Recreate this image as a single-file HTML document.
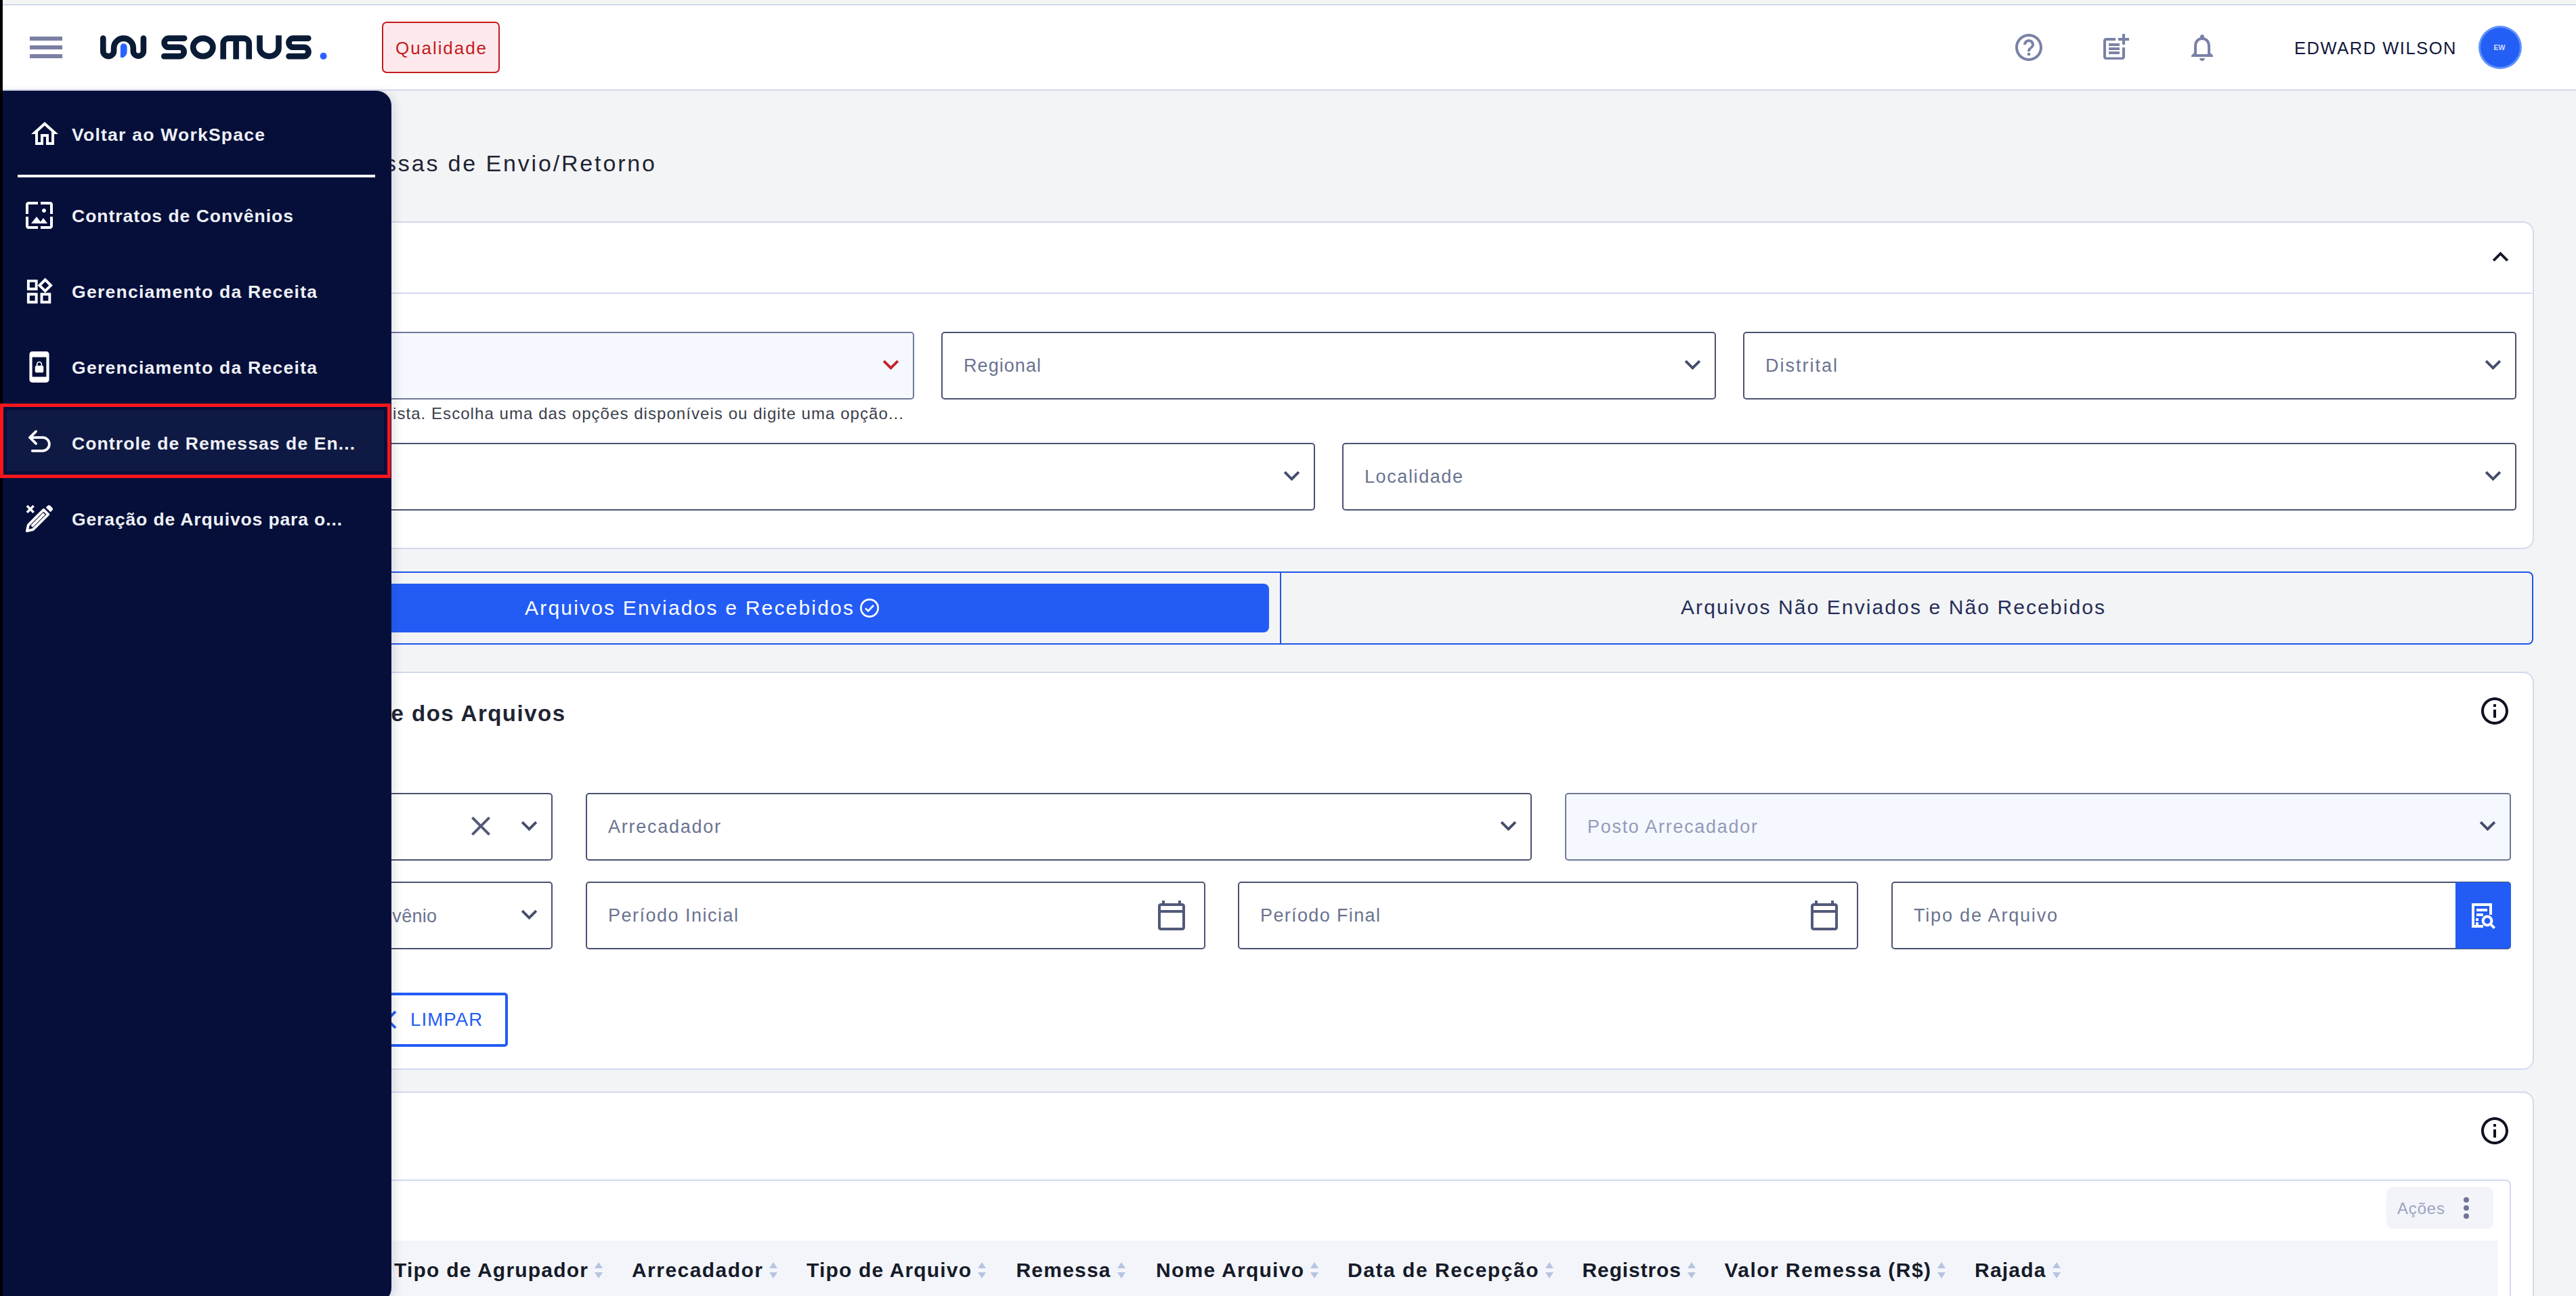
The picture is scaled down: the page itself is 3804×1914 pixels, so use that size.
<!DOCTYPE html><html><head><meta charset="utf-8"><title>Somus</title><style>html,body{margin:0;padding:0;}body{width:3804px;height:1914px;position:relative;overflow:hidden;font-family:"Liberation Sans",sans-serif;background:#f3f4f6;}body>div,body>svg{position:absolute;display:block;}.t{white-space:nowrap;}</style></head><body>
<div style="left:0px;top:0px;width:3804px;height:1914px;background:#f3f4f6;"></div>
<div style="left:0px;top:0px;width:3804px;height:6px;background:#f5f5f5;"></div>
<div style="left:0px;top:6px;width:3804px;height:2px;background:#d3d9ee;"></div>
<div style="left:0px;top:8px;width:3804px;height:124px;background:#fff;"></div>
<div style="left:0px;top:132px;width:3804px;height:2px;background:#d3d9ee;"></div>
<div style="left:44px;top:54px;width:48px;height:6px;background:#7b80a3;"></div>
<div style="left:44px;top:67px;width:48px;height:6px;background:#7b80a3;"></div>
<div style="left:44px;top:80px;width:48px;height:6px;background:#7b80a3;"></div>
<svg style="left:130px;top:30px;" width="370" height="80" viewBox="0 0 2576 557"><g fill="none" stroke="#0a1b36" stroke-width="60"><path stroke-linecap="round" d="M155,185 V315 a55,55 0 0 0 110,0 V285 a100,100 0 0 1 200,0 V315 a52.5,52.5 0 0 0 105,0 V185"/><path stroke-linecap="round" d="M990,185 H830 a46,46 0 0 0 0,92 H940 a46.5,46.5 0 0 1 0,93 H782"/><ellipse cx="1182" cy="277.5" rx="102" ry="92"/><path d="M1390,400 V240 a55,55 0 0 1 55,-55 H1600 a55,55 0 0 1 55,55 V400 M1522,185 V400"/><path d="M1765,155 V285 a97.5,85 0 0 0 195,0 V155"/><path stroke-linecap="round" d="M2265,185 H2110 a46,46 0 0 0 0,92 H2220 a46.5,46.5 0 0 1 0,93 H2065"/></g><path fill="#2a62ff" d="M365,238 c22,0 36,16 36,40 v40 c0,38 -24,62 -52,66 c-10,1 -16,-4 -16,-14 v-96 c0,-22 12,-36 32,-36z"/><circle cx="2420" cy="368" r="35" fill="#2a62ff"/></svg>
<div style="left:564px;top:32px;width:174px;height:76px;background:#fde9eb;border:2.5px solid #c41a1f;border-radius:7px;box-sizing:border-box;"></div>
<div class="t" style="left:584px;top:52.5px;line-height:36px;font-size:26px;color:#c41a1f;letter-spacing:1.933px;">Qualidade</div>
<svg style="left:2972px;top:46px;" width="48" height="48" viewBox="0 0 24 24"><path fill="#7a81a6" d="M11 18h2v-2h-2v2zm1-16C6.48 2 2 6.48 2 12s4.48 10 10 10 10-4.48 10-10S17.52 2 12 2zm0 18c-4.41 0-8-3.59-8-8s3.59-8 8-8 8 3.59 8 8-3.590 8-8 8zm0-14c-2.21 0-4 1.79-4 4h2c0-1.10.9-2 2-2s2 .9 2 2c0 2-3 1.75-3 5h2c0-2.25 3-2.5 3-5 0-2.21-1.79-4-4-4z"/></svg>
<svg style="left:3100px;top:46px;" width="48" height="48" viewBox="0 0 24 24"><path fill="#7a81a6" d="M17 19.22H5V7h7V5H5c-1.1 0-2 .9-2 2v12c0 1.1.9 2 2 2h12c1.1 0 2-.9 2-2v-7h-2v7.22z M19 2h-2v3h-3c.01.01 0 2 0 2h3v2.990c.01.01 2 0 2 0V7h3V5h-3V2z M7 9h8v2H7z M7 12v2h8v-2h-3z M7 15h8v2H7z"/></svg>
<svg style="left:3228px;top:46px;" width="48" height="48" viewBox="0 0 24 24"><path fill="#7a81a6" d="M12 22c1.1 0 2-.9 2-2h-4c0 1.1.9 2 2 2zm6-6v-5c0-3.070-1.630-5.640-4.5-6.320V4c0-.83-.67-1.500-1.500-1.500s-1.500.67-1.500 1.500v.68C7.640 5.360 6 7.920 6 11v5l-2 2v1h16v-1l-2-2zm-2 1H8v-6c0-2.480 1.510-4.500 4-4.500s4 2.020 4 4.500v6z"/></svg>
<div class="t" style="left:3388px;top:53.0px;line-height:36px;font-size:25.5px;color:#10163a;letter-spacing:1.536px;">EDWARD WILSON</div>
<div style="left:3663px;top:41px;width:58px;height:58px;background:#235ff5;border-radius:50%;box-shadow:0 0 0 3px #5f92f9;"></div>
<div class="t" style="left:3682.5px;top:62.8px;line-height:15px;font-size:10.5px;color:#d5dcff;font-weight:bold;">EW</div>
<div class="t" style="right:2834.16px;top:217.0px;line-height:48px;font-size:34px;color:#1f2433;letter-spacing:2.845px;">Controle de Remessas de Envio/Retorno</div>
<div style="left:100px;top:327px;width:3641.5px;height:484px;background:#fff;border:2px solid #d3d9ee;border-radius:16px;box-sizing:border-box;"></div>
<div style="left:102px;top:432px;width:3637px;height:2px;background:#d3d9ee;"></div>
<svg style="left:3669px;top:356px;" width="47" height="47" viewBox="0 0 24 24"><path fill="#15192c" d="M7.41 15.41L12 10.83l4.59 4.58L18 14l-6-6-6 6z"/></svg>
<div style="left:150px;top:490px;width:1200px;height:100px;background:#f5f8fe;border:2px solid #6f7897;border-radius:5px;box-sizing:border-box;"></div>
<svg style="left:1292.0px;top:515.0px;" width="47" height="47" viewBox="0 0 24 24"><path fill="#c5222b" d="M7.41 8.59L12 13.17l4.59-4.58L18 10l-6 6-6-6z"/></svg>
<div style="left:1390px;top:490px;width:1144px;height:100px;background:#fff;border:2px solid #4a5272;border-radius:5px;box-sizing:border-box;"></div>
<div class="t" style="left:1423px;top:520.8px;line-height:38px;font-size:27px;color:#6a7390;letter-spacing:1.060px;">Regional</div>
<svg style="left:2476.0px;top:515.0px;" width="47" height="47" viewBox="0 0 24 24"><path fill="#454d6b" d="M7.41 8.59L12 13.17l4.59-4.58L18 10l-6 6-6-6z"/></svg>
<div style="left:2574px;top:490px;width:1142px;height:100px;background:#fff;border:2px solid #4a5272;border-radius:5px;box-sizing:border-box;"></div>
<div class="t" style="left:2607px;top:520.8px;line-height:38px;font-size:27px;color:#6a7390;letter-spacing:1.999px;">Distrital</div>
<svg style="left:3658.0px;top:515.0px;" width="47" height="47" viewBox="0 0 24 24"><path fill="#454d6b" d="M7.41 8.59L12 13.17l4.59-4.58L18 10l-6 6-6-6z"/></svg>
<div class="t" style="right:2468.94px;top:594.0px;line-height:34px;font-size:24px;color:#3a3f4b;letter-spacing:1.058px;">Valor não encontrado na lista. Escolha uma das opções disponíveis ou digite uma opção...</div>
<div style="left:150px;top:654px;width:1792px;height:100px;background:#fff;border:2px solid #4a5272;border-radius:5px;box-sizing:border-box;"></div>
<svg style="left:1884.0px;top:679.0px;" width="47" height="47" viewBox="0 0 24 24"><path fill="#454d6b" d="M7.41 8.59L12 13.17l4.59-4.58L18 10l-6 6-6-6z"/></svg>
<div style="left:1982px;top:654px;width:1734px;height:100px;background:#fff;border:2px solid #4a5272;border-radius:5px;box-sizing:border-box;"></div>
<div class="t" style="left:2015px;top:684.8px;line-height:38px;font-size:27px;color:#6a7390;letter-spacing:1.598px;">Localidade</div>
<svg style="left:3658.0px;top:679.0px;" width="47" height="47" viewBox="0 0 24 24"><path fill="#454d6b" d="M7.41 8.59L12 13.17l4.59-4.58L18 10l-6 6-6-6z"/></svg>
<div style="left:100px;top:844px;width:3641px;height:108px;border:2px solid #1f56e4;border-radius:8px;box-sizing:border-box;"></div>
<div style="left:1890px;top:844px;width:2px;height:108px;background:#1f56e4;"></div>
<div style="left:120px;top:862px;width:1754px;height:72px;background:#235cf5;border-radius:8px;"></div>
<div class="t" style="left:775px;top:877.0px;line-height:42px;font-size:30px;color:#fff;letter-spacing:2.193px;">Arquivos Enviados e Recebidos</div>
<svg style="left:1268px;top:882px;" width="32" height="32" viewBox="0 0 24 24"><circle cx="12" cy="12" r="9.5" fill="none" stroke="#fff" stroke-width="2"/><path d="M7.5 12.300l3 3 6-6.300" fill="none" stroke="#fff" stroke-width="2"/></svg>
<div class="t" style="left:2482px;top:876.0px;line-height:42px;font-size:30px;color:#252e57;letter-spacing:2.102px;">Arquivos Não Enviados e Não Recebidos</div>
<div style="left:100px;top:992px;width:3641.5px;height:588px;background:#fff;border:2px solid #d3d9ee;border-radius:16px;box-sizing:border-box;"></div>
<div class="t" style="right:2968.51px;top:1031.0px;line-height:46px;font-size:33px;color:#1f2433;font-weight:bold;letter-spacing:1.487px;">Controle dos Arquivos</div>
<svg style="left:3660px;top:1026px;" width="48" height="48" viewBox="0 0 24 24"><path fill="#0e1220" d="M11 7h2v2h-2zm0 4h2v6h-2zm1-9C6.48 2 2 6.48 2 12s4.48 10 10 10 10-4.48 10-10S17.52 2 12 2zm0 18c-4.41 0-8-3.59-8-8s3.59-8 8-8 8 3.59 8 8-3.590 8-8 8z"/></svg>
<div style="left:150px;top:1171px;width:666px;height:100px;background:#fff;border:2px solid #4a5272;border-radius:5px;box-sizing:border-box;"></div>
<svg style="left:758.0px;top:1196.0px;" width="47" height="47" viewBox="0 0 24 24"><path fill="#454d6b" d="M7.41 8.59L12 13.17l4.59-4.58L18 10l-6 6-6-6z"/></svg>
<svg style="left:686px;top:1196px;" width="48" height="48" viewBox="0 0 24 24"><path fill="#525a7a" d="M19 6.41L17.59 5 12 10.59 6.41 5 5 6.41 10.59 12 5 17.590 6.41 19 12 13.41 17.590 19 19 17.590 13.41 12z"/></svg>
<div style="left:865px;top:1171px;width:1397px;height:100px;background:#fff;border:2px solid #4a5272;border-radius:5px;box-sizing:border-box;"></div>
<div class="t" style="left:898px;top:1201.8px;line-height:38px;font-size:27px;color:#6a7390;letter-spacing:1.741px;">Arrecadador</div>
<svg style="left:2204.0px;top:1196.0px;" width="47" height="47" viewBox="0 0 24 24"><path fill="#454d6b" d="M7.41 8.59L12 13.17l4.59-4.58L18 10l-6 6-6-6z"/></svg>
<div style="left:2311px;top:1171px;width:1397px;height:100px;background:#f5f8fe;border:2px solid #6f7897;border-radius:5px;box-sizing:border-box;"></div>
<div class="t" style="left:2344px;top:1201.8px;line-height:38px;font-size:27px;color:#949bb8;letter-spacing:1.710px;">Posto Arrecadador</div>
<svg style="left:3650.0px;top:1196.0px;" width="47" height="47" viewBox="0 0 24 24"><path fill="#454d6b" d="M7.41 8.59L12 13.17l4.59-4.58L18 10l-6 6-6-6z"/></svg>
<div style="left:150px;top:1302px;width:666px;height:100px;background:#fff;border:2px solid #4a5272;border-radius:5px;box-sizing:border-box;"></div>
<svg style="left:758.0px;top:1327.0px;" width="47" height="47" viewBox="0 0 24 24"><path fill="#454d6b" d="M7.41 8.59L12 13.17l4.59-4.58L18 10l-6 6-6-6z"/></svg>
<div class="t" style="right:3158.73px;top:1334.0px;line-height:38px;font-size:27px;color:#6a7390;letter-spacing:0.274px;">Tipo de Convênio</div>
<div style="left:865px;top:1302px;width:915px;height:100px;background:#fff;border:2px solid #4a5272;border-radius:5px;box-sizing:border-box;"></div>
<div class="t" style="left:898px;top:1332.8px;line-height:38px;font-size:27px;color:#6a7390;letter-spacing:1.493px;">Período Inicial</div>
<svg style="left:1706px;top:1328px;" width="48" height="48" viewBox="0 0 24 24"><path fill="#525a7a" d="M20 3h-1V1h-2v2H7V1H5v2H4c-1.1 0-2 .9-2 2v16c0 1.1.9 2 2 2h16c1.100 0 2-.9 2-2V5c0-1.100-.9-2-2-2zm0 18H4V10h16v11zm0-13H4V5h16v3z"/></svg>
<div style="left:1828px;top:1302px;width:916px;height:100px;background:#fff;border:2px solid #4a5272;border-radius:5px;box-sizing:border-box;"></div>
<div class="t" style="left:1861px;top:1332.8px;line-height:38px;font-size:27px;color:#6a7390;letter-spacing:1.367px;">Período Final</div>
<svg style="left:2670px;top:1328px;" width="48" height="48" viewBox="0 0 24 24"><path fill="#525a7a" d="M20 3h-1V1h-2v2H7V1H5v2H4c-1.1 0-2 .9-2 2v16c0 1.1.9 2 2 2h16c1.100 0 2-.9 2-2V5c0-1.100-.9-2-2-2zm0 18H4V10h16v11zm0-13H4V5h16v3z"/></svg>
<div style="left:2793px;top:1302px;width:915px;height:100px;background:#fff;border:2px solid #4a5272;border-radius:5px;box-sizing:border-box;"></div>
<div class="t" style="left:2826px;top:1332.8px;line-height:38px;font-size:27px;color:#6a7390;letter-spacing:1.813px;">Tipo de Arquivo</div>
<div style="left:3626px;top:1303px;width:82px;height:98px;background:#235cf5;border-radius:0 5px 5px 0;"></div>
<svg style="left:3641px;top:1328px;" width="48" height="48" viewBox="0 0 24 24"><g fill="none" stroke="#fff" stroke-width="2"><path d="M13 20H5.500V4h13v7.500"/><path d="M8 8h8M8 11.500h5"/><circle cx="16" cy="16" r="3.200"/><path d="M18.300 18.300l3 3"/></g><rect x="7.500" y="14" width="2" height="2" fill="#fff"/><rect x="7.500" y="17" width="2" height="2" fill="#fff"/></svg>
<div style="left:400px;top:1466px;width:349.5px;height:80px;border:4px solid #235cf5;border-radius:5px;box-sizing:border-box;background:#fff;"></div>
<div class="t" style="left:606px;top:1487.0px;line-height:38px;font-size:27.5px;color:#235cf5;letter-spacing:1.130px;">LIMPAR</div>
<svg style="left:549.4px;top:1483px;" width="46" height="46" viewBox="0 0 24 24"><path fill="#235cf5" d="M19 6.41L17.59 5 12 10.59 6.41 5 5 6.41 10.59 12 5 17.590 6.41 19 12 13.41 17.590 19 19 17.590 13.41 12z"/></svg>
<div style="left:100px;top:1612px;width:3641.5px;height:400px;background:#fff;border:2px solid #d3d9ee;border-radius:16px;box-sizing:border-box;"></div>
<svg style="left:3660px;top:1646px;" width="48" height="48" viewBox="0 0 24 24"><path fill="#0e1220" d="M11 7h2v2h-2zm0 4h2v6h-2zm1-9C6.48 2 2 6.48 2 12s4.48 10 10 10 10-4.48 10-10S17.52 2 12 2zm0 18c-4.41 0-8-3.59-8-8s3.59-8 8-8 8 3.59 8 8-3.590 8-8 8z"/></svg>
<div style="left:140px;top:1742px;width:3568px;height:300px;border:2px solid #d3d9ee;border-radius:8px;box-sizing:border-box;background:#fff;"></div>
<div style="left:3524px;top:1753px;width:158px;height:62px;background:#f2f4fa;border-radius:10px;"></div>
<div class="t" style="left:3540px;top:1768.0px;line-height:34px;font-size:24px;color:#9ea4bf;letter-spacing:0.824px;">Ações</div>
<div style="left:3638px;top:1768px;width:8px;height:8px;background:#6f7598;border-radius:50%;"></div>
<div style="left:3638px;top:1780px;width:8px;height:8px;background:#6f7598;border-radius:50%;"></div>
<div style="left:3638px;top:1792px;width:8px;height:8px;background:#6f7598;border-radius:50%;"></div>
<div style="left:160px;top:1832px;width:3528px;height:100px;background:#f3f5fa;"></div>
<div class="t" style="left:582px;top:1855.0px;line-height:42px;font-size:30px;color:#161b29;font-weight:bold;letter-spacing:1.208px;">Tipo de Agrupador</div>
<svg style="left:877px;top:1860px;" width="14" height="32" viewBox="0 0 14 32"><path d="M7 4l6 9H1z M7 28l6-9H1z" fill="#b7c3e0"/></svg>
<div class="t" style="left:933px;top:1855.0px;line-height:42px;font-size:30px;color:#161b29;font-weight:bold;letter-spacing:1.459px;">Arrecadador</div>
<svg style="left:1135px;top:1860px;" width="14" height="32" viewBox="0 0 14 32"><path d="M7 4l6 9H1z M7 28l6-9H1z" fill="#b7c3e0"/></svg>
<div class="t" style="left:1191px;top:1855.0px;line-height:42px;font-size:30px;color:#161b29;font-weight:bold;letter-spacing:1.166px;">Tipo de Arquivo</div>
<svg style="left:1443px;top:1860px;" width="14" height="32" viewBox="0 0 14 32"><path d="M7 4l6 9H1z M7 28l6-9H1z" fill="#b7c3e0"/></svg>
<div class="t" style="left:1500.5px;top:1855.0px;line-height:42px;font-size:30px;color:#161b29;font-weight:bold;letter-spacing:1.206px;">Remessa</div>
<svg style="left:1648.5px;top:1860px;" width="14" height="32" viewBox="0 0 14 32"><path d="M7 4l6 9H1z M7 28l6-9H1z" fill="#b7c3e0"/></svg>
<div class="t" style="left:1707px;top:1855.0px;line-height:42px;font-size:30px;color:#161b29;font-weight:bold;letter-spacing:1.281px;">Nome Arquivo</div>
<svg style="left:1934px;top:1860px;" width="14" height="32" viewBox="0 0 14 32"><path d="M7 4l6 9H1z M7 28l6-9H1z" fill="#b7c3e0"/></svg>
<div class="t" style="left:1990px;top:1855.0px;line-height:42px;font-size:30px;color:#161b29;font-weight:bold;letter-spacing:1.537px;">Data de Recepção</div>
<svg style="left:2280.5px;top:1860px;" width="14" height="32" viewBox="0 0 14 32"><path d="M7 4l6 9H1z M7 28l6-9H1z" fill="#b7c3e0"/></svg>
<div class="t" style="left:2336.5px;top:1855.0px;line-height:42px;font-size:30px;color:#161b29;font-weight:bold;letter-spacing:0.891px;">Registros</div>
<svg style="left:2491px;top:1860px;" width="14" height="32" viewBox="0 0 14 32"><path d="M7 4l6 9H1z M7 28l6-9H1z" fill="#b7c3e0"/></svg>
<div class="t" style="left:2546.5px;top:1855.0px;line-height:42px;font-size:30px;color:#161b29;font-weight:bold;letter-spacing:1.433px;">Valor Remessa (R$)</div>
<svg style="left:2860px;top:1860px;" width="14" height="32" viewBox="0 0 14 32"><path d="M7 4l6 9H1z M7 28l6-9H1z" fill="#b7c3e0"/></svg>
<div class="t" style="left:2916px;top:1855.0px;line-height:42px;font-size:30px;color:#161b29;font-weight:bold;letter-spacing:1.224px;">Rajada</div>
<svg style="left:3029.5px;top:1860px;" width="14" height="32" viewBox="0 0 14 32"><path d="M7 4l6 9H1z M7 28l6-9H1z" fill="#b7c3e0"/></svg>
<div style="left:0px;top:134px;width:578px;height:1790px;background:#050f3a;border-radius:0 22px 22px 0;box-shadow:5px 2px 14px rgba(35,45,85,0.13);"></div>
<div style="left:0px;top:0px;width:4px;height:1914px;background:#000;"></div>
<div style="left:26px;top:258px;width:528px;height:4px;background:#fff;"></div>
<div style="left:0px;top:596px;width:577px;height:110px;border:5px solid #f5161c;box-sizing:border-box;"></div>
<div style="left:10px;top:606px;width:557px;height:90px;background:#0f1a44;"></div>
<svg style="left:42px;top:174px;" width="48" height="48" viewBox="0 0 24 24"><path fill="#ffffff" d="M12 5.690l5 4.500V18h-2v-6H9v6H7v-7.810l5-4.500M12 3L2 12h3v8h6v-6h2v6h6v-8h3L12 3z"/></svg>
<div class="t" style="left:106px;top:180.5px;line-height:37px;font-size:26.5px;color:#eef0f6;font-weight:bold;letter-spacing:1.242px;">Voltar ao WorkSpace</div>
<svg style="left:34px;top:294px;" width="48" height="48" viewBox="0 0 24 24"><path fill="#ffffff" d="M4 4h7V2H4c-1.1 0-2 .9-2 2v7h2V4zm6 9l-4 5h12l-3-4-2.030 2.710L10 13zm7-4.500c0-.83-.67-1.500-1.500-1.500S14 7.670 14 8.500s.67 1.500 1.500 1.500S17 9.330 17 8.500zM20 2h-7v2h7v7h2V4c0-1.100-.9-2-2-2zm0 18h-7v2h7c1.100 0 2-.9 2-2v-7h-2v7zM4 13H2v7c0 1.100.9 2 2 2h7v-2H4v-7z"/></svg>
<div class="t" style="left:106px;top:300.5px;line-height:37px;font-size:26.5px;color:#eef0f6;font-weight:bold;letter-spacing:0.988px;">Contratos de Convênios</div>
<svg style="left:34px;top:406.6px;" width="47.2" height="47.2" viewBox="0 0 24 24"><path fill="#ffffff" d="M16.660 4.520l2.830 2.830-2.830 2.830-2.830-2.830 2.830-2.830M9 5v4H5V5h4m10 10v4h-4v-4h4M9 15v4H5v-4h4m7.660-13.310L11 7.340 16.660 13l5.660-5.660-5.660-5.650zM11 3H3v8h8V3zm10 10h-8v8h8v-8zm-10 0H3v8h8v-8z"/></svg>
<div class="t" style="left:106px;top:412.5px;line-height:37px;font-size:26.5px;color:#eef0f6;font-weight:bold;letter-spacing:1.267px;">Gerenciamento da Receita</div>
<svg style="left:33px;top:517px;" width="50" height="50" viewBox="0 0 24 24"><path fill="#ffffff" d="M10 16h4c.55 0 1-.45 1-1v-3c0-.55-.45-1-1-1v-1c0-1.110-.9-2-2-2-1.110 0-2 .9-2 2v1c-.55 0-1 .45-1 1v3c0 .55.45 1 1 1zm.8-6c0-.66.54-1.200 1.200-1.200.66 0 1.200.54 1.200 1.200v1h-2.400v-1zM17 1H7c-1.100 0-2 .9-2 2v18c0 1.100.9 2 2 2h10c1.100 0 2-.9 2-2V3c0-1.100-.9-2-2-2zm0 18H7V5h10v14z"/></svg>
<div class="t" style="left:106px;top:525.0px;line-height:37px;font-size:26.5px;color:#eef0f6;font-weight:bold;letter-spacing:1.267px;">Gerenciamento da Receita</div>
<svg style="left:36.5px;top:629.5px;" width="43" height="43" viewBox="0 0 24 24"><g fill="none" stroke="#fff" stroke-width="2.100" stroke-linecap="round" stroke-linejoin="round"><path d="M9 14 4 9l5-5"/><path d="M4 9h10.500a5.500 5.500 0 0 1 0 11H6"/></g></svg>
<div class="t" style="left:106px;top:636.5px;line-height:37px;font-size:26.5px;color:#eef0f6;font-weight:bold;letter-spacing:1.096px;">Controle de Remessas de En...</div>
<svg style="left:34px;top:743px;" width="47" height="47" viewBox="0 0 24 24"><g fill="none" stroke="#fff" stroke-width="2" stroke-linejoin="round"><path d="M3 21l1-4.500L15.500 5l3.500 3.500L7.500 20z"/><path d="M6.500 17.500L16 8"/></g><path d="M17.200 3.300l1.300-1.300a1.500 1.500 0 0 1 2.100 0l1.400 1.400a1.500 1.500 0 0 1 0 2.100l-1.300 1.300z" fill="#fff"/><path d="M3 2l5 5M8 2l-5 5" stroke="#fff" stroke-width="1.800" fill="none"/></svg>
<div class="t" style="left:106px;top:748.5px;line-height:37px;font-size:26.5px;color:#eef0f6;font-weight:bold;letter-spacing:0.873px;">Geração de Arquivos para o...</div>
</body></html>
